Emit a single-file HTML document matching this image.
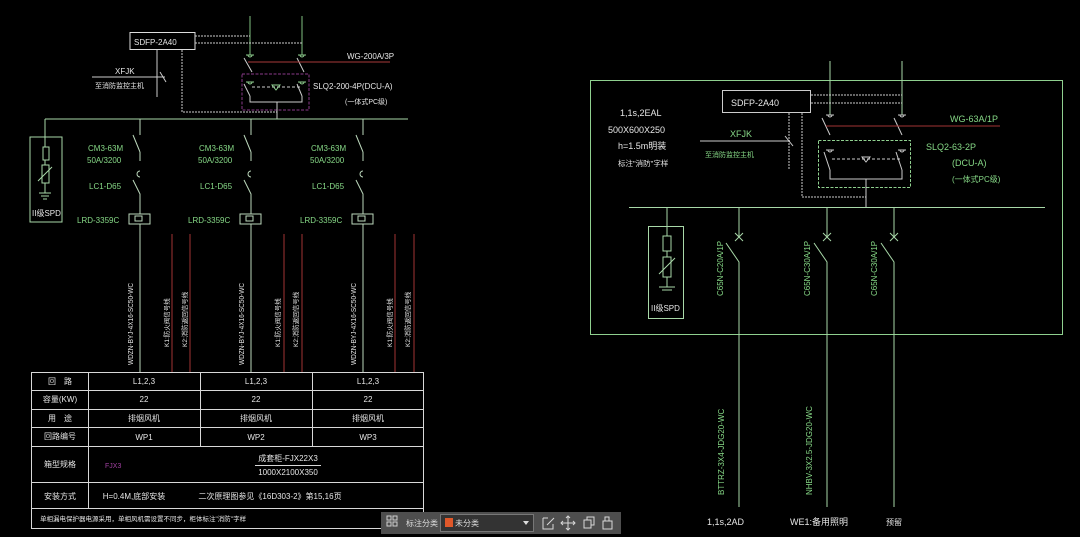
<!DOCTYPE html>
<html><head><meta charset="utf-8"><style>
html,body{margin:0;padding:0;background:#000;width:1080px;height:537px;overflow:hidden}
svg{display:block}
text{font-family:"Liberation Sans Narrow","Liberation Sans","Noto Sans CJK SC",sans-serif;font-size:8px}
.w{fill:#e6e6e6}.g{fill:#86d886}
</style></head><body>
<svg width="1080" height="537" viewBox="0 0 1080 537" xmlns="http://www.w3.org/2000/svg">
<rect width="1080" height="537" fill="#000"/>
<g fill="none" stroke-width="1">
<line x1="250" y1="16" x2="250" y2="55" stroke="#7fc07f"/>
<line x1="302" y1="16" x2="302" y2="55" stroke="#7fc07f"/>
<rect x="130" y="32.5" width="65" height="17" stroke="#ddd"/>
<line x1="195" y1="36" x2="250" y2="36" stroke="#ccc" stroke-dasharray="2,1"/>
<line x1="195" y1="43" x2="302" y2="43" stroke="#ccc" stroke-dasharray="2,1"/>
<line x1="157" y1="50" x2="157" y2="97" stroke="#ccc"/>
<polyline points="182,50 182,112 277,112" stroke="#ccc" stroke-dasharray="2,1"/>
<line x1="92" y1="77" x2="165" y2="77" stroke="#ccc"/>
<line x1="160" y1="72" x2="166" y2="82" stroke="#ccc"/>
<path d="M246,55 h8 M248,55 a2,2 0 0 0 4,0 M298,55 h8 M300,55 a2,2 0 0 0 4,0" stroke="#8fd08f"/>
<line x1="244" y1="58" x2="252" y2="72" stroke="#ccc"/>
<line x1="297" y1="58" x2="304" y2="72" stroke="#ccc"/>
<line x1="248" y1="62" x2="390" y2="62" stroke="#a83a3a"/>
<rect x="242" y="74" width="67" height="36" stroke="#8a3a8a" stroke-dasharray="3,1.5"/>
<path d="M246,82 h8 M248,82 a2,2 0 0 0 4,0 M298,82 h8 M300,82 a2,2 0 0 0 4,0" stroke="#8fd08f"/>
<line x1="252" y1="87" x2="300" y2="87" stroke="#ccc" stroke-dasharray="3,2"/>
<path d="M272,85 h8 l-4,5 z" stroke="#8fd08f"/>
<line x1="244" y1="84" x2="250" y2="96" stroke="#ccc"/>
<line x1="297" y1="84" x2="302" y2="96" stroke="#ccc"/>
<polyline points="250,96 250,102 302,102 302,96" stroke="#ccc"/>
<line x1="277" y1="102" x2="277" y2="119" stroke="#ccc"/>
<line x1="45" y1="119" x2="408" y2="119" stroke="#a8d8a8"/>
<line x1="45" y1="119" x2="45" y2="137" stroke="#a8d8a8"/>
<rect x="30" y="137" width="32" height="85" stroke="#a8d8a8"/>
<rect x="43" y="147" width="6" height="13" stroke="#a8d8a8"/>
<rect x="42" y="165" width="7" height="18" stroke="#a8d8a8"/>
<path d="M45,137 v10 M45,160 v5 M45,183 v10 M38,181 l14,-14 M39,193 h12 M41,196 h8 M43,199 h4" stroke="#a8d8a8"/>
</g>
<g fill="none">
<g id="br" stroke="#bcd8bc">
<path d="M140,119 v16 M133,135 l7,17 M140,152 v9"/>
<path d="M140,171 a3,3 0 0 0 0,6" />
<path d="M133,180 l7,14 v20 M140,224 v148"/>
<rect x="129" y="214" width="21" height="10"/>
<rect x="135" y="216" width="7" height="5"/>
</g>
<use href="#br" x="111"/>
<use href="#br" x="223"/>
<path d="M172,234 v138 M190,234 v138 M284,234 v138 M302,234 v138 M395,234 v138 M414,234 v138" stroke="#a23434"/>
</g>
<text x="134" y="45" class="w">SDFP-2A40</text>
<text x="115" y="74" class="w">XFJK</text>
<text x="95" y="88" class="w" style="font-size:7px">至消防监控主机</text>
<text x="347" y="59" class="w">WG-200A/3P</text>
<text x="313" y="89" class="w">SLQ2-200-4P(DCU-A)</text>
<text x="345" y="104" class="w" style="font-size:7px">(一体式PC级)</text>
<text x="32" y="216" class="w">II级SPD</text>
<g id="lb">
<text x="88" y="151" class="g">CM3-63M</text>
<text x="87" y="163" class="g">50A/3200</text>
<text x="89" y="189" class="g">LC1-D65</text>
<text x="77" y="223" class="g">LRD-3359C</text>
<text transform="translate(133,365) rotate(-90)" class="w" style="font-size:7px" textLength="82" lengthAdjust="spacingAndGlyphs">WDZN-BYJ-4X16-SC50-WC</text>
<text transform="translate(169,347) rotate(-90)" class="w" style="font-size:6.5px">K1:防火阀信号线</text>
<text transform="translate(187,347) rotate(-90)" class="w" style="font-size:6.5px">K2:消防返回信号线</text>
</g>
<use href="#lb" x="111"/>
<use href="#lb" x="223"/>
<g fill="none" stroke="#d8d8d8">
<rect x="31.5" y="372.5" width="392" height="156"/>
<path d="M31,390.5 H423 M31,409.5 H423 M31,427.5 H423 M31,446.5 H423 M31,482.5 H423 M31,508.5 H423 M88.5,372 V508 M200.5,372 V446 M312.5,372 V446 M255,465.5 H321"/>
</g>
<g class="w" style="font-size:7px" text-anchor="middle">
<text x="60" y="384">回　路</text><text x="60" y="402">容量(KW)</text><text x="60" y="421">用　途</text><text x="60" y="439">回路编号</text><text x="60" y="467">箱型规格</text><text x="60" y="499">安装方式</text>
<text x="144" y="384">L1,2,3</text><text x="256" y="384">L1,2,3</text><text x="368" y="384">L1,2,3</text>
<text x="144" y="402">22</text><text x="256" y="402">22</text><text x="368" y="402">22</text>
<text x="144" y="421">排烟风机</text><text x="256" y="421">排烟风机</text><text x="368" y="421">排烟风机</text>
<text x="144" y="440">WP1</text><text x="256" y="440">WP2</text><text x="368" y="440">WP3</text>
<text x="288" y="461">成套柜-FJX22X3</text><text x="288" y="475">1000X2100X350</text>
<text x="134" y="499">H=0.4M,底部安装</text><text x="270" y="499">二次原理图参见《16D303-2》第15,16页</text>
</g>
<text x="105" y="468" style="font-size:7px;fill:#a040a0">FJX3</text>
<text x="40" y="521" class="w" style="font-size:6.5px">单相漏电保护器电源采用，单相风机需设置不同步，柜体标注"消防"字样</text>
<g fill="none">
<rect x="590.5" y="80.5" width="472" height="254" stroke="#8fd08f"/>
<line x1="830" y1="61" x2="830" y2="115" stroke="#a8d8a8"/>
<line x1="902" y1="61" x2="902" y2="115" stroke="#a8d8a8"/>
<rect x="722.5" y="90.5" width="88" height="22" stroke="#ccc"/>
<line x1="811" y1="95" x2="902" y2="95" stroke="#ccc" stroke-dasharray="2,1"/>
<line x1="811" y1="103" x2="902" y2="103" stroke="#ccc" stroke-dasharray="2,1"/>
<line x1="789" y1="113" x2="789" y2="170" stroke="#ccc" stroke-dasharray="2,1"/>
<polyline points="802,113 802,197 866,197" stroke="#ccc" stroke-dasharray="2,1"/>
<line x1="700" y1="141" x2="790" y2="141" stroke="#ccc"/>
<line x1="785" y1="136" x2="793" y2="146" stroke="#ccc"/>
<path d="M826,115 h8 M828,115 a2,2 0 0 0 4,0 M898,115 h8 M900,115 a2,2 0 0 0 4,0" stroke="#ccc"/>
<line x1="822" y1="118" x2="830" y2="135" stroke="#ccc"/>
<line x1="894" y1="118" x2="902" y2="135" stroke="#ccc"/>
<line x1="826" y1="126" x2="1000" y2="126" stroke="#a23434"/>
<rect x="818.5" y="140.5" width="92" height="47" stroke="#8fd08f" stroke-dasharray="3,1.5"/>
<path d="M826,150 h8 M828,150 a2,2 0 0 0 4,0 M898,150 h8 M900,150 a2,2 0 0 0 4,0" stroke="#ccc"/>
<line x1="832" y1="159" x2="900" y2="159" stroke="#ccc" stroke-dasharray="3,2"/>
<path d="M862,157 h8 l-4,5 z" stroke="#ccc"/>
<line x1="824" y1="152" x2="830" y2="170" stroke="#ccc"/>
<line x1="896" y1="152" x2="902" y2="170" stroke="#ccc"/>
<polyline points="830,170 830,179 902,179 902,170" stroke="#ccc"/>
<line x1="866" y1="179" x2="866" y2="207" stroke="#ccc"/>
<line x1="629" y1="207.5" x2="1045" y2="207.5" stroke="#a8d8a8"/>
<line x1="667" y1="207" x2="667" y2="226" stroke="#a8d8a8"/>
<rect x="648.5" y="226.5" width="35" height="92" stroke="#a8d8a8"/>
<rect x="663" y="236" width="8" height="15" stroke="#a8d8a8"/>
<rect x="663" y="257" width="8" height="20" stroke="#a8d8a8"/>
<path d="M667,226 v10 M667,251 v6 M667,277 v10 M659,274 l16,-16 M659,287 h16 M662,290 h10" stroke="#a8d8a8"/>
<g id="rb" stroke="#a8d8a8">
<path d="M739,207 v30 M735,233 l8,8 M743,233 l-8,8 M726,243 l13,19 v245"/>
</g>
<use href="#rb" x="88"/>
<use href="#rb" x="155"/>
</g>
<text x="731" y="106" class="w" style="font-size:9px">SDFP-2A40</text>
<text x="730" y="137" class="g" style="font-size:9px">XFJK</text>
<text x="705" y="157" class="g" style="font-size:7px">至消防监控主机</text>
<text x="620" y="116" class="w" style="font-size:9px">1,1s,2EAL</text>
<text x="608" y="133" class="w" style="font-size:9px">500X600X250</text>
<text x="618" y="149" class="w" style="font-size:9px">h=1.5m明装</text>
<text x="618" y="166" class="w" style="font-size:7.5px">标注"消防"字样</text>
<text x="950" y="122" class="g" style="font-size:9px">WG-63A/1P</text>
<text x="926" y="150" class="g" style="font-size:9px">SLQ2-63-2P</text>
<text x="952" y="166" class="g" style="font-size:9px">(DCU-A)</text>
<text x="952" y="182" class="g" style="font-size:8px">(一体式PC级)</text>
<text x="651" y="311" class="w" style="font-size:8px">II级SPD</text>
<g class="g" style="font-size:8px">
<text transform="translate(723,296) rotate(-90)">C65N-C20A/1P</text>
<text transform="translate(810,296) rotate(-90)">C65N-C30A/1P</text>
<text transform="translate(877,296) rotate(-90)">C65N-C30A/1P</text>
<text transform="translate(724,495) rotate(-90)">BTTRZ-3X4-JDG20-WC</text>
<text transform="translate(812,495) rotate(-90)">NHBV-3X2.5-JDG20-WC</text>
</g>
<text x="707" y="525" class="w" style="font-size:9px">1,1s,2AD</text>
<text x="790" y="525" class="w" style="font-size:9px">WE1:备用照明</text>
<text x="886" y="525" class="w" style="font-size:8px">预留</text>
<rect x="381" y="512" width="240" height="22" fill="#4e4e4e"/>
<g fill="none" stroke="#cfcfcf">
<rect x="387" y="516" width="4" height="4"/><rect x="393" y="516" width="4" height="4"/><rect x="387" y="522" width="4" height="4"/><rect x="393" y="522" width="4" height="4"/>
</g>
<text x="406" y="526" style="font-size:8px;fill:#ddd">标注分类</text>
<rect x="440.5" y="514.5" width="93" height="17" fill="#333" stroke="#777"/>
<rect x="445" y="518" width="8" height="9" fill="#e0582a"/>
<text x="455" y="526" style="font-size:8px;fill:#ddd">未分类</text>
<path d="M523,521 h6 l-3,4 z" fill="#ddd"/>
<g fill="none" stroke="#d8d8d8">
<path d="M543,518 h5 M543,518 v11 h10 v-5 M547,525 l7,-7"/>
<path d="M568,516 v14 M561,523 h14 M566,518 l2,-2 l2,2 M566,528 l2,2 l2,-2 M563,521 l-2,2 l2,2 M573,521 l2,2 l-2,2"/>
<rect x="584" y="520" width="7" height="8"/><path d="M587,520 v-3 h7 v8 h-3"/>
<rect x="603" y="521" width="9" height="8"/><path d="M605,521 v-4 h4 v4"/>
</g>
</svg>
</body></html>
